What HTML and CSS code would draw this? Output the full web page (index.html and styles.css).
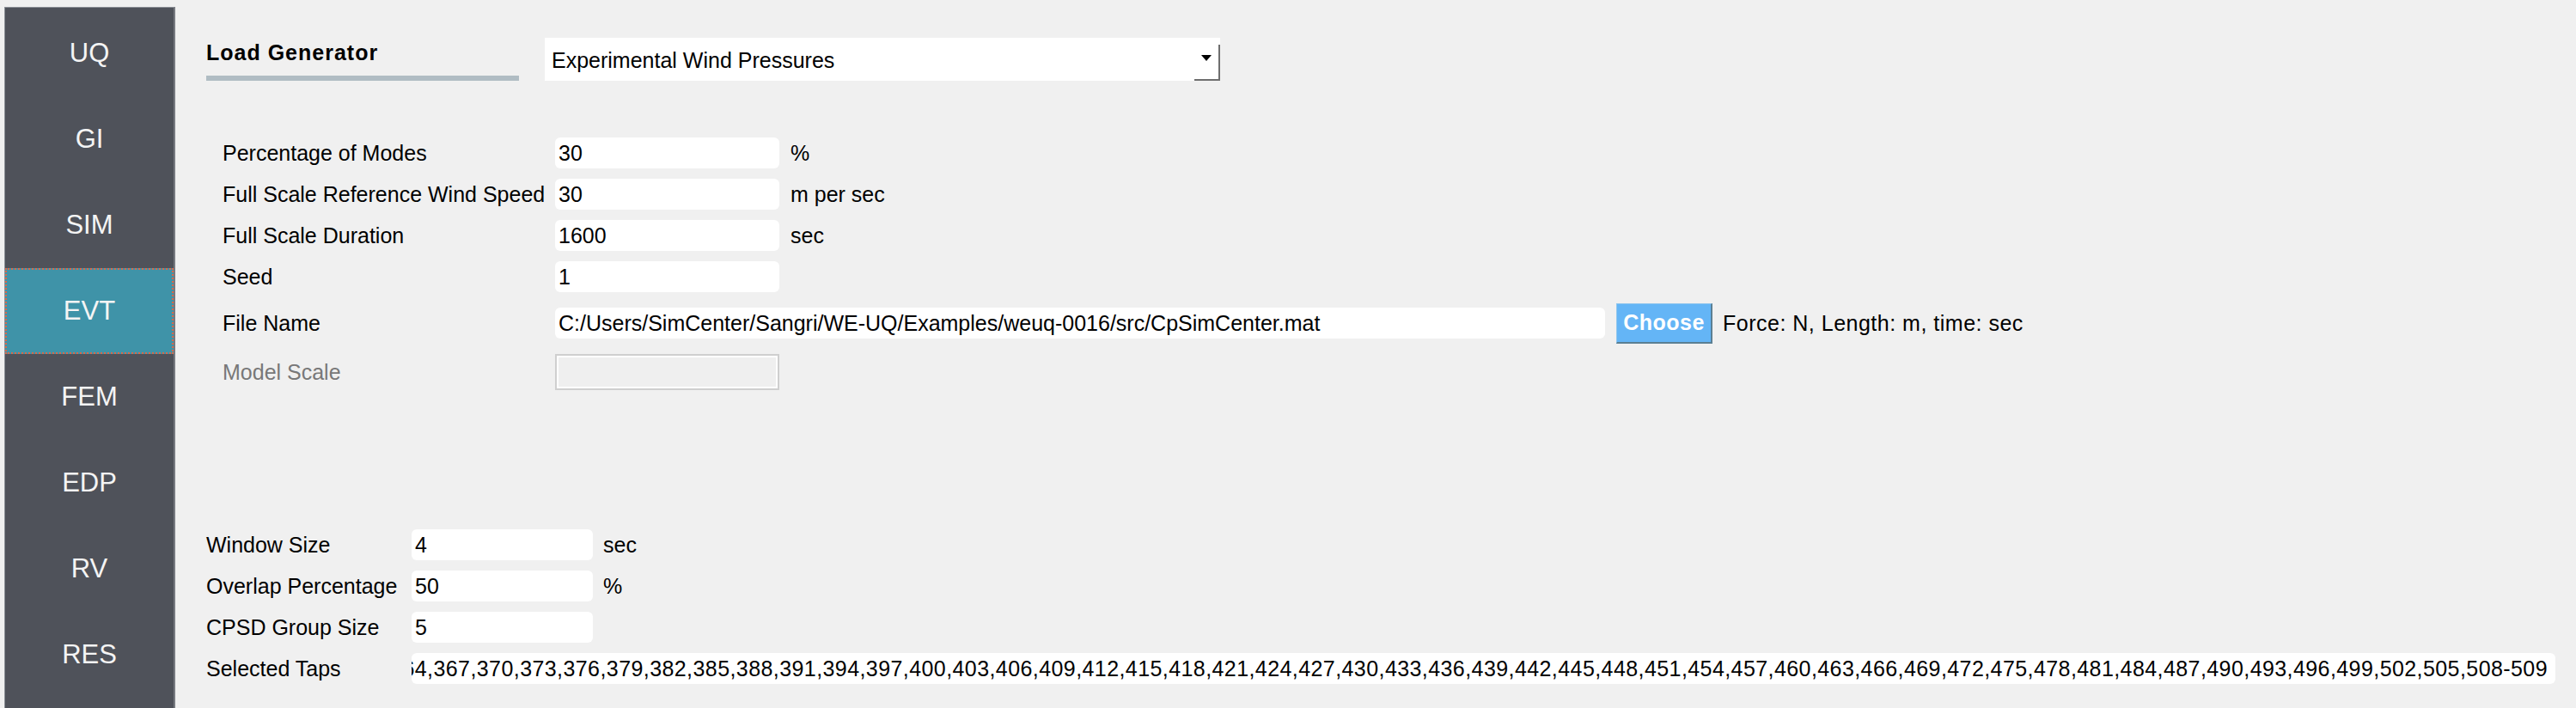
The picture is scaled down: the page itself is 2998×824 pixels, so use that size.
FILE: index.html
```html
<!DOCTYPE html>
<html>
<head>
<meta charset="utf-8">
<link rel="stylesheet" href="styles.css">
</head>
<body>
<div class="app">
  <nav class="sidebar">
    <div class="nav-item">UQ</div>
    <div class="nav-item">GI</div>
    <div class="nav-item">SIM</div>
    <div class="nav-item active">EVT</div>
    <div class="nav-item">FEM</div>
    <div class="nav-item">EDP</div>
    <div class="nav-item">RV</div>
    <div class="nav-item">RES</div>
  </nav>
  <main class="main">
    <div class="header">
      <div class="title-block">
        <div class="title">Load Generator</div>
        <div class="title-bar"></div>
      </div>
      <div class="dropdown">
        <span class="dropdown-text">Experimental Wind Pressures</span>
        <span class="dropdown-btn"><span class="tri"></span></span>
      </div>
    </div>

    <div class="group1">
      <div class="row">
        <span class="label l1">Percentage of Modes</span>
        <span class="field f1">30</span>
        <span class="unit">%</span>
      </div>
      <div class="row">
        <span class="label l1">Full Scale Reference Wind Speed</span>
        <span class="field f1">30</span>
        <span class="unit">m per sec</span>
      </div>
      <div class="row">
        <span class="label l1">Full Scale Duration</span>
        <span class="field f1">1600</span>
        <span class="unit">sec</span>
      </div>
      <div class="row">
        <span class="label l1">Seed</span>
        <span class="field f1">1</span>
      </div>
      <div class="row row-file">
        <span class="label l1">File Name</span>
        <span class="field f-file">C:/Users/SimCenter/Sangri/WE-UQ/Examples/weuq-0016/src/CpSimCenter.mat</span>
        <span class="btn">Choose</span>
        <span class="unit-file">Force: N, Length: m, time: sec</span>
      </div>
      <div class="row row-model">
        <span class="label l1 disabled">Model Scale</span>
        <span class="field f-disabled"></span>
      </div>
    </div>

    <div class="group2">
      <div class="row">
        <span class="label l2">Window Size</span>
        <span class="field f2">4</span>
        <span class="unit u2">sec</span>
      </div>
      <div class="row">
        <span class="label l2">Overlap Percentage</span>
        <span class="field f2">50</span>
        <span class="unit u2">%</span>
      </div>
      <div class="row">
        <span class="label l2">CPSD Group Size</span>
        <span class="field f2">5</span>
      </div>
      <div class="row">
        <span class="label l2">Selected Taps</span>
        <span class="field f-taps"><span class="taps-text">364,367,370,373,376,379,382,385,388,391,394,397,400,403,406,409,412,415,418,421,424,427,430,433,436,439,442,445,448,451,454,457,460,463,466,469,472,475,478,481,484,487,490,493,496,499,502,505,508-509</span></span>
      </div>
    </div>
  </main>
</div>
</body>
</html>
```

FILE: styles.css
```css
html, body {
  margin: 0;
  padding: 0;
}
body {
  background: #f0f0f0;
  font-family: "Liberation Sans", Arial, sans-serif;
  font-size: 25px;
  color: #000;
  width: 2998px;
  height: 824px;
  overflow: hidden;
}
.app {
  display: flex;
  height: 824px;
}
.sidebar {
  margin-left: 5px;
  margin-top: 8px;
  width: 196px;
  flex: none;
  background: #4f525a;
  border-left: 1px solid #8b8f96;
  border-top: 1px solid #8b8f96;
  border-right: 2px solid #777a81;
  padding-top: 3px;
  display: flex;
  flex-direction: column;
}
.nav-item {
  height: 100px;
  display: flex;
  align-items: center;
  justify-content: center;
  color: #f4f4f4;
  font-size: 31px;
  box-sizing: border-box;
}
.nav-item.active {
  background: #3f93a8;
  outline: 2px dotted #d6694c;
  outline-offset: -2px;
}
.main {
  flex: 1;
  padding-left: 36px;
}
.header {
  display: flex;
  align-items: flex-start;
  margin-top: 44px;
  height: 50px;
}
.title-block {
  width: 364px;
  padding-top: 2px;
}
.title {
  font-weight: bold;
  letter-spacing: 1px;
  line-height: 30px;
  height: 30px;
}
.title-bar {
  margin-top: 12px;
  height: 6px;
  background: #b0bcc3;
}
.dropdown {
  margin-left: 30px;
  width: 786px;
  height: 50px;
  background: #fff;
  display: flex;
  align-items: stretch;
}
.dropdown-text {
  flex: 1;
  padding-left: 8px;
  line-height: 50px;
  padding-top: 1px;
}
.dropdown-btn {
  width: 30px;
  margin-top: 8px;
  border-right: 2px solid #6e6e6e;
  border-bottom: 2px solid #6e6e6e;
  display: flex;
  justify-content: center;
  align-items: flex-start;
  padding-top: 12px;
  box-sizing: border-box;
}
.tri {
  width: 0;
  height: 0;
  border-left: 6px solid transparent;
  border-right: 6px solid transparent;
  border-top: 7px solid #000;
}
.group1 {
  margin-top: 60px;
  padding-left: 19px;
}
.row {
  display: flex;
  align-items: center;
  height: 48px;
}
.label {
  flex: none;
  white-space: nowrap;
}
.l1 {
  width: 387px;
}
.l2 {
  width: 239px;
}
.field {
  flex: none;
  height: 36px;
  line-height: 36px;
  background: #fff;
  border-radius: 6px;
  padding-left: 4px;
  box-sizing: border-box;
  white-space: nowrap;
  overflow: hidden;
}
.f1 {
  width: 261px;
}
.f2 {
  width: 211px;
}
.unit {
  margin-left: 13px;
}
.u2 {
  margin-left: 12px;
}
.row-file {
  height: 60px;
}
.f-file {
  width: 1222px;
}
.btn {
  margin-left: 13px;
  width: 112px;
  height: 47px;
  box-sizing: border-box;
  background: #64b5f6;
  border-top: 1px solid #8fc6ee;
  border-left: 1px solid #8fc6ee;
  border-right: 2px solid #5b7f93;
  border-bottom: 2px solid #5b7f93;
  color: #fff;
  font-weight: bold;
  letter-spacing: 0.5px;
  display: flex;
  align-items: center;
  justify-content: center;
}
.unit-file {
  margin-left: 12px;
  white-space: nowrap;
  letter-spacing: 0.5px;
}
.row-model {
  height: 54px;
}
.disabled {
  color: #787878;
}
.f-disabled {
  width: 261px;
  height: 42px;
  border-radius: 0;
  background: #efefef;
  border: 2px solid #cfcfcf;
  box-shadow: inset 0 0 0 2px #ffffff;
}
.group2 {
  margin-top: 150px;
}
.f-taps {
  width: 2495px;
  display: flex;
  justify-content: flex-end;
  padding-left: 0;
  padding-right: 9px;
}
.taps-text {
  flex: none;
  letter-spacing: 0.42px;
}
```
